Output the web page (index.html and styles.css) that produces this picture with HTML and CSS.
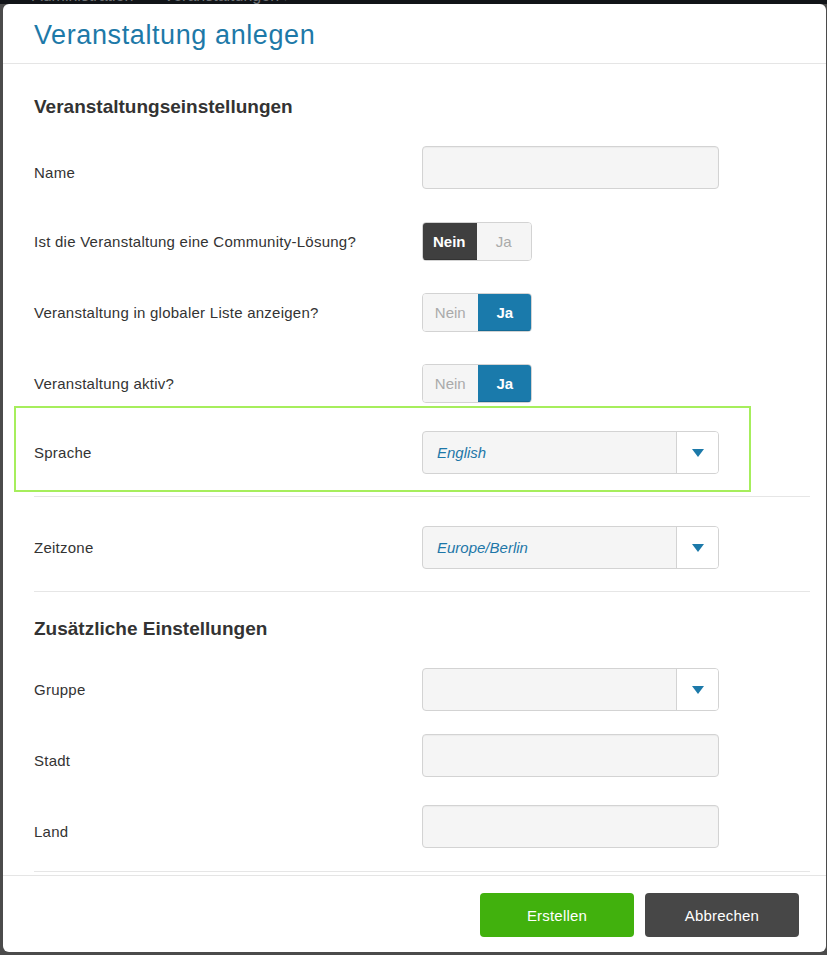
FILE: index.html
```html
<!DOCTYPE html>
<html lang="de">
<head>
<meta charset="utf-8">
<title>Veranstaltung anlegen</title>
<link rel="stylesheet" href="styles.css">
</head>
<body>
<div class="topbar">
  <span class="nav-item">Administration</span>
  <span class="nav-item">Veranstaltungen <span class="caret">▾</span></span>
</div>
<div class="modal">
  <div class="modal-header">
    <h1 class="modal-title">Veranstaltung anlegen</h1>
  </div>
  <div class="modal-body">
    <section class="section section-main">
      <h2 class="section-title">Veranstaltungseinstellungen</h2>
      <div class="row row-name">
        <label class="label label-input">Name</label>
        <div class="control"><div class="input"></div></div>
      </div>
      <div class="row row-community">
        <label class="label">Ist die Veranstaltung eine Community-Lösung?</label>
        <div class="control">
          <div class="toggle"><span class="seg seg-dark">Nein</span><span class="seg seg-off">Ja</span></div>
        </div>
      </div>
      <div class="row row-global">
        <label class="label">Veranstaltung in globaler Liste anzeigen?</label>
        <div class="control">
          <div class="toggle"><span class="seg seg-off">Nein</span><span class="seg seg-blue">Ja</span></div>
        </div>
      </div>
      <div class="row row-active">
        <label class="label">Veranstaltung aktiv?</label>
        <div class="control">
          <div class="toggle"><span class="seg seg-off">Nein</span><span class="seg seg-blue">Ja</span></div>
        </div>
      </div>
      <div class="row row-lang">
        <div class="highlight"></div>
        <label class="label">Sprache</label>
        <div class="control">
          <div class="select"><span class="select-value">English</span><span class="select-arrow"><svg width="12" height="8" viewBox="0 0 12 8"><polygon points="0,0 12,0 6,8" fill="#1c79a9"/></svg></span></div>
        </div>
      </div>
    </section>
    <section class="section section-tz">
      <div class="row">
        <label class="label">Zeitzone</label>
        <div class="control">
          <div class="select"><span class="select-value">Europe/Berlin</span><span class="select-arrow"><svg width="12" height="8" viewBox="0 0 12 8"><polygon points="0,0 12,0 6,8" fill="#1c79a9"/></svg></span></div>
        </div>
      </div>
    </section>
    <section class="section section-extra">
      <h2 class="section-title">Zusätzliche Einstellungen</h2>
      <div class="row row-group">
        <label class="label">Gruppe</label>
        <div class="control">
          <div class="select"><span class="select-value"></span><span class="select-arrow"><svg width="12" height="8" viewBox="0 0 12 8"><polygon points="0,0 12,0 6,8" fill="#1c79a9"/></svg></span></div>
        </div>
      </div>
      <div class="row row-city">
        <label class="label label-input">Stadt</label>
        <div class="control"><div class="input"></div></div>
      </div>
      <div class="row row-country">
        <label class="label label-input">Land</label>
        <div class="control"><div class="input"></div></div>
      </div>
    </section>
  </div>
  <div class="modal-footer">
    <button class="btn btn-create">Erstellen</button>
    <button class="btn btn-cancel">Abbrechen</button>
  </div>
</div>
</body>
</html>
```
FILE: styles.css
```css
* { box-sizing: border-box; }
html, body { margin: 0; padding: 0; }
body {
  background: #4b4b4b;
  font-family: "Liberation Sans", Arial, sans-serif;
  color: #333;
  width: 827px;
  height: 955px;
  overflow: hidden;
}
.topbar {
  height: 4px;
  overflow: hidden;
  background: #111418;
  display: flex;
  gap: 30px;
  padding-left: 32px;
}
.nav-item {
  display: block;
  margin-top: -14px;
  font-size: 16px;
  line-height: 20px;
  color: #6f7276;
}
.caret { font-size: 10px; }
.modal {
  margin-left: 3px;
  width: 823px;
  background: #fff;
  border-radius: 6px;
  display: flex;
  flex-direction: column;
}
.modal-header {
  padding: 17px 31px 13px;
  border-bottom: 1px solid #e5e5e5;
}
.modal-title {
  margin: 0;
  font-size: 27px;
  line-height: 29px;
  letter-spacing: 0.6px;
  font-weight: normal;
  color: #1d79a8;
}
.modal-body {
  padding: 0 16px 3px 31px;
}
.section { border-bottom: 1px solid #e6e6e6; }
.section-main { padding: 33px 0 22px; }
.section-tz { padding: 29px 0 22px; }
.section-extra { padding: 27px 0 23px; }
.section-title {
  margin: 0;
  font-size: 19px;
  line-height: 20px;
  font-weight: bold;
  color: #333;
}
.row {
  display: grid;
  grid-template-columns: 1fr 1fr;
  align-items: center;
  min-height: 43px;
}
.row-name { margin-top: 29px; }
.row-community { margin-top: 31px; }
.row-global { margin-top: 28px; }
.row-active { margin-top: 28px; }
.row-lang { margin-top: 26px; position: relative; }
.row-group { margin-top: 29px; }
.row-city { margin-top: 23px; }
.row-country { margin-top: 28px; }
.label {
  font-size: 15px;
  line-height: 20px;
  letter-spacing: 0.25px;
  color: #333;
}
.label-input { padding-top: 10px; }
.input {
  width: 297px;
  height: 43px;
  background: #f5f5f5;
  border: 1px solid #d3d3d3;
  border-radius: 4px;
  box-shadow: inset 0 1px 1px rgba(0,0,0,0.04);
}
.toggle {
  display: flex;
  width: 110px;
  height: 39px;
  border-radius: 4px;
  overflow: hidden;
  border: 1px solid #d3d3d3;
}
.seg {
  flex: 1;
  display: flex;
  align-items: center;
  justify-content: center;
  font-size: 15px;
}
.seg-off { background: #f5f5f5; color: #aaa; }
.seg-dark {
  background: #3f3f3f;
  color: #fff;
  font-weight: bold;
  margin: -1px 0 -1px -1px;
  box-shadow: inset 0 -2px 0 #333;
}
.seg-blue {
  background: #1a7aab;
  color: #fff;
  font-weight: bold;
  margin: -1px -1px -1px 0;
  box-shadow: inset 0 -2px 0 #146a95;
}
.select {
  width: 297px;
  height: 43px;
  display: flex;
  background: #f5f5f5;
  border: 1px solid #d3d3d3;
  border-radius: 4px;
  overflow: hidden;
}
.select-value {
  flex: 1;
  display: flex;
  align-items: center;
  padding-left: 14px;
  font-size: 15px;
  font-style: italic;
  color: #1d77a8;
}
.select-arrow {
  width: 42px;
  display: flex;
  align-items: center;
  justify-content: center;
  background: #fff;
  border-left: 1px solid #d3d3d3;
}
.highlight {
  position: absolute;
  top: -25px;
  left: -20px;
  width: 737px;
  height: 86px;
  border: 2px solid #a6ee5c;
  pointer-events: none;
}
.modal-footer {
  border-top: 1px solid #e5e5e5;
  padding: 17px 27px 15px;
  display: flex;
  justify-content: flex-end;
  gap: 11px;
}
.btn {
  width: 154px;
  height: 44px;
  border: 0;
  border-radius: 4px;
  font-family: "Liberation Sans", Arial, sans-serif;
  font-size: 15px;
  letter-spacing: 0.2px;
  color: #fff;
}
.btn-create { background: #41b10d; }
.btn-cancel { background: #474747; }
```
